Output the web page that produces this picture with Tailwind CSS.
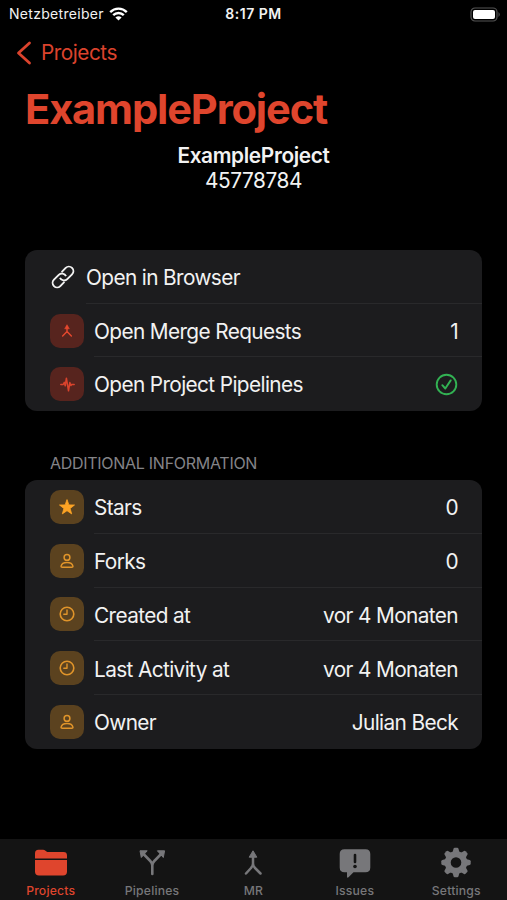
<!DOCTYPE html>
<html lang="en">
<head>
<meta charset="utf-8">
<meta name="viewport" content="width=device-width, initial-scale=1">
<title>ExampleProject</title>
<script src="https://cdn.jsdelivr.net/npm/@tailwindcss/browser@4"></script>
</head>
<body class="bg-black">
<svg class="hidden">
  <symbol id="merge" viewBox="0 0 24 24"><path d="M12 4.5V13L4.5 20.5M12 13l7.5 7.5" fill="none" stroke="currentColor" stroke-width="2.5" stroke-linecap="round" stroke-linejoin="round"/><path d="M12 1.2L16 8.2H8Z" fill="currentColor" stroke="currentColor" stroke-width="1" stroke-linejoin="round"/></symbol>
  <symbol id="person" viewBox="0 0 14 16"><circle cx="7" cy="4.4" r="2.9" fill="none" stroke="currentColor" stroke-width="1.5"/><path d="M2.2 14.3H11.8Q13 14.3 12.900 13.200C12.500 11 10 9.400 7 9.400S1.500 11 1.100 13.200Q1 14.300 2.200 14.300Z" fill="none" stroke="currentColor" stroke-width="1.5"/></symbol>
  <symbol id="clock" viewBox="0 0 16 16"><circle cx="8" cy="8" r="6.800" fill="none" stroke="currentColor" stroke-width="1.600"/><path d="M8 4V8.300H4.800" fill="none" stroke="currentColor" stroke-width="1.400" stroke-linecap="round" stroke-linejoin="round"/></symbol>
</svg>
<div class="flex h-[900px] w-[507px] flex-col overflow-hidden bg-black font-['Inter',sans-serif] text-[20.8px] leading-[25px] tracking-[-0.4px] text-[#f2f2f2]">
  <header class="grid h-7 shrink-0 grid-cols-3 items-center pr-[6px] pl-[9px] text-[14px] leading-[28px] tracking-[0.3px]">
    <div class="flex items-center gap-[5px]"><span>Netzbetreiber</span>
      <svg class="h-[14px] w-[19px]" viewBox="0 0 19 14" fill="none" stroke="#fff" stroke-width="2.4"><path d="M1.2 5.1C5.9.5 13.1.5 17.8 5.1M4.2 8.2C7.2 5.3 11.8 5.3 14.8 8.2"/><path d="M9.5 13.6L6.4 10.6Q9.5 8.1 12.6 10.6Z" fill="#fff" stroke="none"/></svg>
    </div>
    <span class="-ml-[3px] text-center font-semibold tracking-[0.5px]">8:17 PM</span>
    <svg class="h-[15px] w-[31px] justify-self-end" viewBox="0 0 31 15"><rect x="1" y="1" width="26" height="13" rx="4" fill="none" stroke="#555" stroke-width="1.2"/><rect x="3" y="3" width="22" height="9" rx="2" fill="#fff"/><path d="M28.5 5Q31 7.5 28.5 10Z" fill="#555"/></svg>
  </header>
  <nav class="flex h-[49px] shrink-0 items-center gap-[9px] pl-4 tracking-[-0.5px] text-[#db432d]">
    <svg class="h-6 w-4" viewBox="0 0 16 24" fill="none" stroke="currentColor" stroke-width="2.8" stroke-linecap="round" stroke-linejoin="round"><path d="M13.5 2L2.5 12l11 10"/></svg>
    <span>Projects</span>
  </nav>
  <h1 class="h-[66px] shrink-0 pl-[25px] text-[41.6px] leading-[64px] font-bold tracking-[-1.12px] text-[#df452d]">ExampleProject</h1>
  <div class="h-[107px] shrink-0 text-center">
    <p class="font-semibold tracking-[-0.33px]">ExampleProject</p>
    <p>45778784</p>
  </div>
  <section class="mr-[25px] ml-[25px] flex h-[161px] shrink-0 flex-col rounded-[12px] bg-[#1c1c1e] tracking-[-0.62px]">
    <div class="flex flex-1 pl-[25px]">
      <div class="flex w-[36px] items-center"><svg class="h-[26px] w-[26px]" viewBox="0 0 26 26" fill="none" stroke="currentColor" stroke-width="1.9"><g transform="rotate(-45 13 13)"><path d="M10.500 17.500H4.700A4.500 4.500 0 0 1 4.700 8.500H11.500A4.500 4.500 0 0 1 15.800 14.500"/><path d="M15.500 8.500H21.300A4.500 4.500 0 0 1 21.300 17.500H14.500A4.500 4.500 0 0 1 10.200 11.500"/></g></svg></div>
      <div class="flex flex-1 items-center border-b border-[#29292b] pt-[2px]">Open in Browser</div>
    </div>
    <div class="flex flex-1 items-center pl-[25px]">
      <div class="mr-[10px] grid size-[34px] place-items-center rounded-[10px] bg-[#57241e] text-[#e5482e]"><svg class="size-[14px]"><use href="#merge"/></svg></div>
      <div class="flex h-full flex-1 items-center justify-between border-b border-[#29292b] pt-[2px] pr-6"><span>Open Merge Requests</span><span>1</span></div>
    </div>
    <div class="flex flex-1 items-center pl-[25px]">
      <div class="mr-[10px] grid size-[34px] place-items-center rounded-[10px] bg-[#57241e] text-[#d9432c]"><svg class="size-[15px]" viewBox="0 0 15 15" fill="none" stroke="currentColor" stroke-width="1.5" stroke-linejoin="round" stroke-linecap="round"><path d="M.8 7.500H3.200L4.300 5.400L5.200 8.800L6.400 1.200L8.500 13.800L9.800 5.600L10.900 8.600L11.600 7.500H14.200"/></svg></div>
      <div class="flex h-full flex-1 items-center justify-between pt-px pr-6"><span>Open Project Pipelines</span><svg class="size-[23px]" viewBox="0 0 23 23" fill="none" stroke="#32b253" stroke-width="1.9" stroke-linecap="round" stroke-linejoin="round"><circle cx="11.500" cy="11.500" r="9.800"/><path d="M7.300 12.200L10.300 15.500L15.700 7.400"/></svg></div>
    </div>
  </section>
  <h2 class="h-[69px] shrink-0 pt-[42px] pl-[50px] text-[16px] leading-[20px] tracking-[-0.28px] text-[#848488]">ADDITIONAL INFORMATION</h2>
  <section class="mx-[25px] flex h-[269px] shrink-0 flex-col rounded-[12px] bg-[#1c1c1e] tracking-[-0.62px]">
    <div class="flex flex-1 items-center pl-[25px]">
      <div class="mr-[10px] grid size-[34px] place-items-center rounded-[10px] bg-[#5b421f] text-[#fda324]"><svg class="size-[18px]" viewBox="0 0 18 18"><path d="M9 1.600L10.900 6.900L16.500 7L12.100 10.500L13.700 15.900L9 12.700L4.300 15.900L5.900 10.500L1.500 7L7.100 6.900Z" fill="currentColor" stroke="currentColor" stroke-width=".8" stroke-linejoin="round"/></svg></div>
      <div class="flex h-full flex-1 items-center justify-between border-b border-[#29292b] pt-[3px] pr-6"><span>Stars</span><span>0</span></div>
    </div>
    <div class="flex flex-1 items-center pl-[25px]">
      <div class="mr-[10px] grid size-[34px] place-items-center rounded-[10px] bg-[#5b421f] text-[#e0942a]"><svg class="h-4 w-[14px]"><use href="#person"/></svg></div>
      <div class="flex h-full flex-1 items-center justify-between border-b border-[#29292b] pt-[3px] pr-6"><span>Forks</span><span>0</span></div>
    </div>
    <div class="flex flex-1 items-center pl-[25px]">
      <div class="mr-[10px] grid size-[34px] place-items-center rounded-[10px] bg-[#5b421f] text-[#e0942a]"><svg class="size-4"><use href="#clock"/></svg></div>
      <div class="flex h-full flex-1 items-center justify-between border-b border-[#29292b] pt-[3px] pr-6"><span>Created at</span><span>vor 4 Monaten</span></div>
    </div>
    <div class="flex flex-1 items-center pl-[25px]">
      <div class="mr-[10px] grid size-[34px] place-items-center rounded-[10px] bg-[#5b421f] text-[#e0942a]"><svg class="size-4"><use href="#clock"/></svg></div>
      <div class="flex h-full flex-1 items-center justify-between border-b border-[#29292b] pt-[3px] pr-6"><span>Last Activity at</span><span>vor 4 Monaten</span></div>
    </div>
    <div class="flex flex-1 items-center pl-[25px]">
      <div class="mr-[10px] grid size-[34px] place-items-center rounded-[10px] bg-[#5b421f] text-[#e0942a]"><svg class="h-4 w-[14px]"><use href="#person"/></svg></div>
      <div class="flex h-full flex-1 items-center justify-between pr-6"><span>Owner</span><span>Julian Beck</span></div>
    </div>
  </section>
  <footer class="mt-auto grid h-[61px] shrink-0 grid-cols-5 bg-[#141414] pt-[8px] text-[12.2px] leading-[16px] font-medium tracking-[0.2px] text-[#77777a]">
    <div class="flex flex-col items-center gap-[4px] text-[#df452d]"><svg class="h-8 w-[34px]" viewBox="0 0 34 32" fill="currentColor"><path d="M1 11.500V6.500Q1 2.800 4.500 2.800H9Q10.500 2.800 11.500 3.800L12.500 4.600Q13.300 5.100 14.500 5.100H29.500Q33 5.100 33 8.500V11.500Z"/><path d="M1 13H33V24.500Q33 28.500 29 28.500H5Q1 28.500 1 24.500Z"/></svg><span>Projects</span></div>
    <div class="flex flex-col items-center gap-[4px]"><svg class="h-8 w-[34px]" viewBox="0 0 34 32"><path d="M17.300 27V18.500Q17.300 16 15.300 14L8 6.500M17.300 18.500Q17.300 16 19.300 14L26.600 6.500" fill="none" stroke="currentColor" stroke-width="2.600" stroke-linecap="round"/><path d="M5 3.800H12.200L6.300 10.500ZM29.600 3.800H22.400L28.300 10.500Z" fill="currentColor" stroke="currentColor" stroke-linejoin="round"/></svg><span>Pipelines</span></div>
    <div class="flex flex-col items-center gap-[4px]"><svg class="h-8 w-[34px]" viewBox="0 0 34 32"><path d="M17 8V16.500Q17 19 15 21L10 26.500M17 16.500Q17 19 19 21L24.500 26.500" fill="none" stroke="currentColor" stroke-width="2.500" stroke-linecap="round"/><path d="M17 3.800L20.800 10.200H13.200Z" fill="currentColor" stroke="currentColor" stroke-linejoin="round"/></svg><span>MR</span></div>
    <div class="flex flex-col items-center gap-[4px]"><svg class="h-8 w-[34px]" viewBox="0 0 34 32"><path d="M6.500 2.200H27.500Q32.300 2.200 32.300 7V20.500Q32.300 25.300 27.500 25.300H15.500L10.500 30.300Q9 31.500 9 29.500V25.300H6.500Q1.700 25.300 1.700 20.500V7Q1.700 2.200 6.500 2.200Z" fill="currentColor"/><path d="M17 8V15" stroke="#141414" stroke-width="2.600" stroke-linecap="round"/><circle cx="17" cy="19.500" r="1.800" fill="#141414"/></svg><span>Issues</span></div>
    <div class="flex flex-col items-center gap-[4px]"><svg class="h-8 w-[34px]" viewBox="0 0 34 32"><g transform="translate(17 15.500)" fill="currentColor"><circle r="8.300" fill="none" stroke="currentColor" stroke-width="6"/><g id="teeth"><path id="tooth" d="M-3.500 -10L-2.500 -13.700Q-2.200 -14.700 -1.200 -14.700H1.200Q2.200 -14.700 2.500 -13.700L3.500 -10Z"/><use href="#tooth" transform="rotate(45)"/><use href="#tooth" transform="rotate(90)"/><use href="#tooth" transform="rotate(135)"/></g><use href="#teeth" transform="rotate(180)"/></g></svg><span>Settings</span></div>
  </footer>
</div>
</body>
</html>
